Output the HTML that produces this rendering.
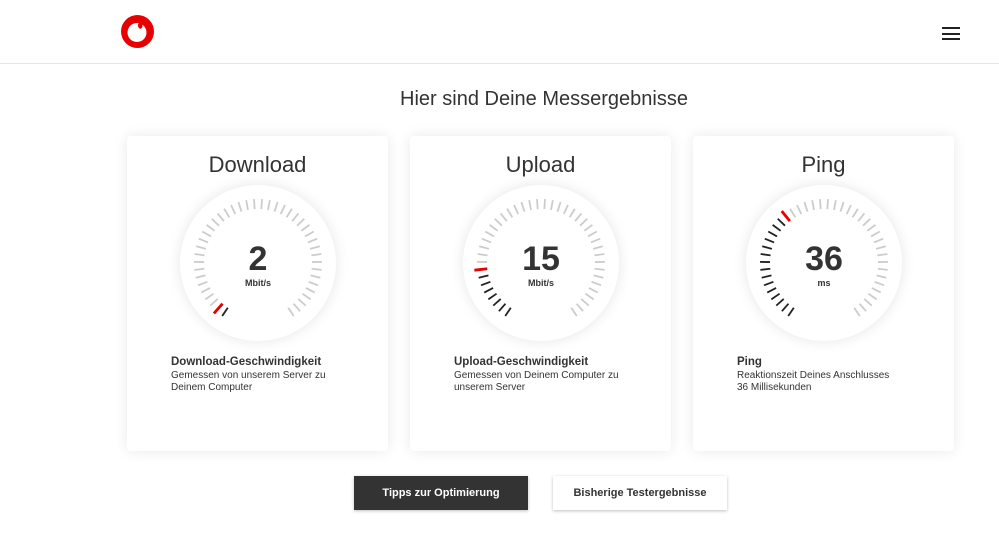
<!DOCTYPE html>
<html><head><meta charset="utf-8"><style>
*{margin:0;padding:0;box-sizing:border-box}
body{width:999px;height:539px;background:#fff;font-family:"Liberation Sans",sans-serif;color:#333;position:relative;overflow:hidden}
.hdr{position:absolute;left:0;top:0;width:999px;height:64px;border-bottom:1px solid #e6e6e6;background:#fff}
.burger{position:absolute;left:942px;width:18px;height:2px;background:#222}
h1{position:absolute;top:88px;left:0;width:1088px;text-align:center;font-weight:normal;font-size:20px;color:#333}
.card{position:absolute;top:136px;width:261px;height:315px;background:#fff;border-radius:4px;box-shadow:0 0 14px rgba(0,0,0,.09)}
.card h2{position:absolute;top:16px;width:100%;text-align:center;font-weight:normal;font-size:22px;color:#333}
.gauge{position:absolute;left:53px;top:49px;width:156px;height:156px;border-radius:50%;background:#fff;box-shadow:0 0 14px rgba(0,0,0,.1)}
.gauge svg{position:absolute;left:0;top:0}
.val{position:absolute;top:55px;width:100%;text-align:center;font-size:34px;font-weight:bold;color:#333}
.unit{position:absolute;top:93px;width:100%;text-align:center;font-size:9px;font-weight:bold;color:#333}
.desc{position:absolute;left:44px;top:220px;font-size:10px;line-height:12px;color:#333}
.desc b{font-size:11.5px;display:block;margin-bottom:2px}
.btn{position:absolute;top:476px;height:34px;width:174px;font-size:11px;font-weight:bold;text-align:center;line-height:34px;box-shadow:0 1px 3px rgba(0,0,0,.25)}
</style></head><body>
<div class="hdr">
<svg style="position:absolute;left:121px;top:15px" width="33" height="33" viewBox="0 0 33 33"><circle cx="16.5" cy="16.5" r="16.5" fill="#e60000"/><circle cx="16" cy="17.5" r="9.5" fill="#fff"/><path d="M17 10.5C17 8.3 18.6 6.6 21 6.2 23 5.9 24 6.4 24 6.4 22 7.5 21.2 9 21.4 11 21.6 13 19.8 14.2 18.4 13.4 17.5 12.8 17 11.8 17 10.5z" fill="#e60000"/></svg>
<div class="burger" style="top:27px"></div><div class="burger" style="top:33px"></div><div class="burger" style="top:38px"></div>
</div>
<h1>Hier sind Deine Messergebnisse</h1>

<div class="card" style="left:127px"><h2>Download</h2>
<div class="gauge"><svg id="g0" width="156" height="156"></svg><div class="val">2</div><div class="unit">Mbit/s</div></div>
<div class="desc"><b>Download-Geschwindigkeit</b>Gemessen von unserem Server zu<br>Deinem Computer</div></div>

<div class="card" style="left:410px"><h2>Upload</h2>
<div class="gauge"><svg id="g1" width="156" height="156"></svg><div class="val">15</div><div class="unit">Mbit/s</div></div>
<div class="desc"><b>Upload-Geschwindigkeit</b>Gemessen von Deinem Computer zu<br>unserem Server</div></div>

<div class="card" style="left:693px"><h2>Ping</h2>
<div class="gauge"><svg id="g2" width="156" height="156"></svg><div class="val">36</div><div class="unit">ms</div></div>
<div class="desc"><b>Ping</b>Reaktionszeit Deines Anschlusses<br>36 Millisekunden</div></div>

<div class="btn" style="left:354px;background:#333;color:#fff">Tipps zur Optimierung</div>
<div class="btn" style="left:553px;background:#fff;color:#333">Bisherige Testergebnisse</div>
<script>
var reds=[1,7,15];
for(var g=0;g<3;g++){
 var s='',N=42;
 for(var i=0;i<N;i++){
  var a=(-146+i*292/(N-1))*Math.PI/180;
  var r1=54,r2=64,col='#ccc',w=1.8;
  if(i<reds[g]){col='#222';}
  if(i==reds[g]){col='#e60000';r1=54;r2=67;w=2.8;}
  var x1=78+r1*Math.sin(a),y1=78-r1*Math.cos(a),x2=78+r2*Math.sin(a),y2=78-r2*Math.cos(a);
  s+='<line x1="'+x1+'" y1="'+y1+'" x2="'+x2+'" y2="'+y2+'" stroke="'+col+'" stroke-width="'+w+'"/>';
 }
 document.getElementById('g'+g).innerHTML=s;
}
</script>
</body></html>
